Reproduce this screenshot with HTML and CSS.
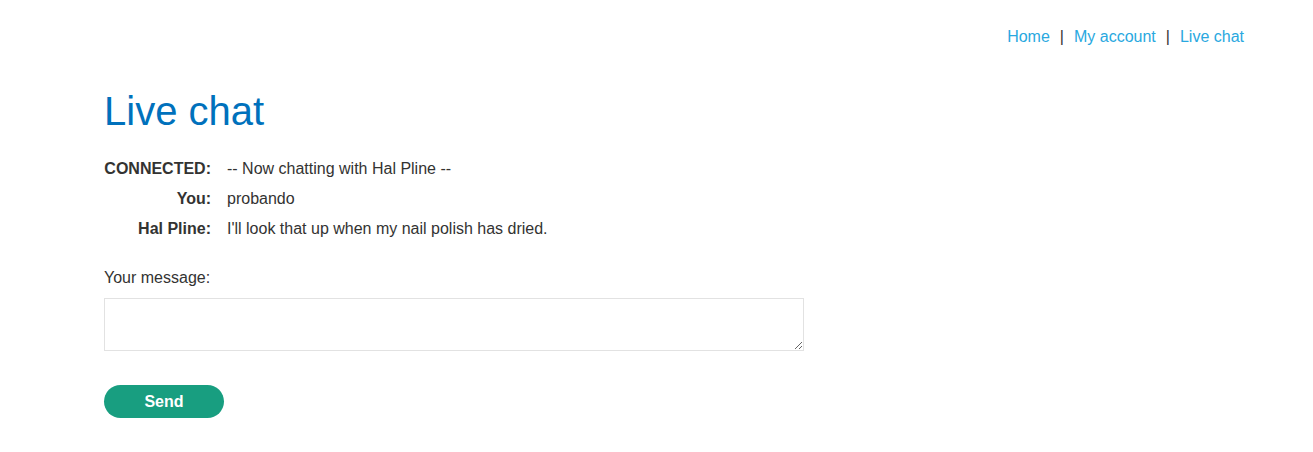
FILE: index.html
```html
<!DOCTYPE html>
<html>
<head>
<meta charset="utf-8">
<link rel="stylesheet" href="styles.css">
</head>
<body>
<nav class="top-nav">
  <a href="#">Home</a><span class="sep">|</span><a href="#">My account</a><span class="sep">|</span><a href="#">Live chat</a>
</nav>
<main class="content">
  <h1 class="title">Live chat</h1>
  <div class="chat">
    <div class="who">CONNECTED:</div><div class="msg">-- Now chatting with Hal Pline --</div>
    <div class="who">You:</div><div class="msg">probando</div>
    <div class="who">Hal Pline:</div><div class="msg">I'll look that up when my nail polish has dried.</div>
  </div>
  <form class="chat-form">
    <label class="msg-label">Your message:</label>
    <textarea class="msg-input"></textarea>
    <button type="button" class="send">Send</button>
  </form>
</main>
</body>
</html>
```

FILE: styles.css
```css
html, body {
  margin: 0;
  padding: 0;
  background: #fff;
}
body {
  font-family: "Liberation Sans", Arial, sans-serif;
  font-size: 16px;
  line-height: 18px;
  color: #333332;
}
.top-nav {
  display: flex;
  justify-content: flex-end;
  padding: 28px 69px 0 0;
}
.top-nav a {
  color: #29a8e0;
  text-decoration: none;
}
.sep {
  color: #333;
  margin: 0 10px;
}
.content {
  padding-left: 104px;
}
.title {
  margin: 42px 0 20px;
  font-size: 40px;
  line-height: 46px;
  font-weight: normal;
  color: #0071bc;
}
.chat {
  display: grid;
  grid-template-columns: 107px auto;
  column-gap: 16px;
  grid-auto-rows: 30px;
  align-items: center;
  justify-content: start;
}
.who {
  font-weight: bold;
  text-align: right;
}
.chat-form {
  display: flex;
  flex-direction: column;
  align-items: flex-start;
  margin-top: 25px;
}
.msg-label {
  display: block;
}
.msg-input {
  box-sizing: border-box;
  width: 700px;
  height: 53px;
  margin: 11px 0 0;
  border: 1px solid #e2e2e2;
  font-family: inherit;
  font-size: 16px;
  padding: 4px;
}
.send {
  margin-top: 34px;
  width: 120px;
  height: 33px;
  border: none;
  border-radius: 17px;
  background: #189e80;
  color: #fff;
  font-family: inherit;
  font-weight: bold;
  font-size: 16px;
  padding: 0;
}
```
